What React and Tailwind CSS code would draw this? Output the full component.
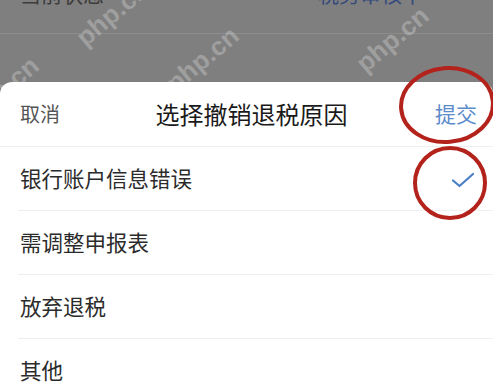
const font = { fontFamily: '"Noto Sans CJK SC", "Noto Sans", sans-serif' };

const reasons = ["银行账户信息错误", "需调整申报表", "放弃退税", "其他"];

function Watermark({ className }) {
    return (
        <div className={`pointer-events-none absolute text-[26px] font-bold text-white/25 -rotate-[40deg] ${className}`} style={{ fontFamily: '"Liberation Sans", sans-serif' }}>
            php.cn
        </div>
    );
}

export default function App() {
    const selected = 0;
    return (
        <div className="relative w-[493px] h-[383px] overflow-hidden bg-[#7f7f7f]" style={font}>
            {/* dimmed page behind the sheet */}
            <div className="h-[34px] overflow-hidden border-b border-[#8c8c8c]">
                <div className="flex justify-between px-5 -mt-[22px] text-[21px]">
                    <span className="text-[#3c3c3c]">当前状态</span>
                    <span className="text-[#33497d] mr-[50px]">税务审核中</span>
                </div>
            </div>
            <div className="h-[48px]" />

            {/* bottom sheet */}
            <div className="bg-white rounded-t-[12px]">
                <div className="flex items-center justify-between h-[65px] px-5 border-b border-[#eeeeee]">
                    <button className="text-[20px] text-[#555555]">取消</button>
                    <div className="text-[24px] text-[#1a1a1a] ml-[8px]">选择撤销退税原因</div>
                    <button className="text-[21px] text-[#5b8bcb] -mr-[4px]">提交</button>
                </div>
                <div className="pl-[18px]">
                    {reasons.map((r, i) => (
                        <div key={r} className="flex items-center justify-between h-[64px] pr-5 border-b border-[#efefef]">
                            <span className="pl-[2px] text-[21.5px] text-[#2b2b2b]">{r}</span>
                            {i === selected && (
                                <svg width="24" height="16" viewBox="0 0 24 16" className="-mr-[2px] mt-[2px]">
                                    <path d="M2 8.5 L8.5 14 L22 2" fill="none" stroke="#4a7fc6" strokeWidth="2.2" strokeLinecap="round" strokeLinejoin="round" />
                                </svg>
                            )}
                        </div>
                    ))}
                </div>
            </div>

            {/* red annotation circles */}
            <svg className="pointer-events-none absolute left-0 top-0" width="493" height="383">
                <ellipse cx="447" cy="105" rx="46" ry="37" fill="none" stroke="#b3221b" strokeWidth="4" transform="rotate(-5 447 105)" />
                <ellipse cx="450" cy="183" rx="35" ry="35" fill="none" stroke="#b3221b" strokeWidth="4" />
            </svg>

            <Watermark className="left-[70px] -top-[6px]" />
            <Watermark className="left-[160px] top-[40px]" />
            <Watermark className="left-[350px] top-[20px]" />
            <Watermark className="-left-[40px] top-[70px]" />
        </div>
    );
}
